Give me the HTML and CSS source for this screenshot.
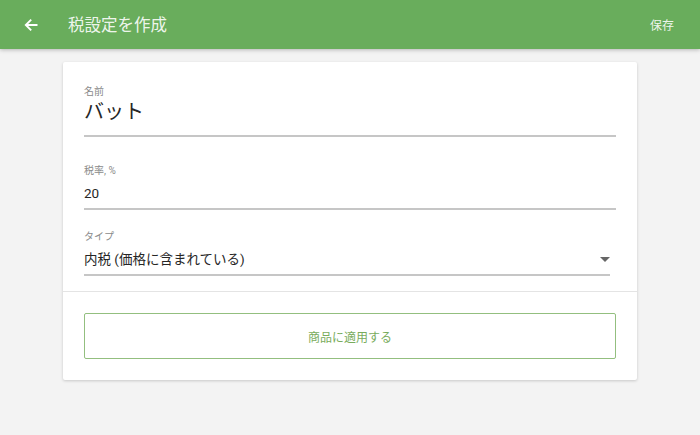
FILE: index.html
```html
<!DOCTYPE html>
<html lang="ja">
<head>
<meta charset="utf-8">
<link rel="stylesheet" href="styles.css">
</head>
<body>
<header class="appbar">
  <svg class="back" width="14" height="14" viewBox="0 0 14 14"><path d="M13.5 7H2M7.2 1.6L1.8 7l5.4 5.4" fill="none" stroke="#fff" stroke-width="1.9"/></svg>
  <h1 class="title">税設定を作成</h1>
  <span class="save">保存</span>
</header>
<main class="card">
  <section class="fields">
    <div class="field name">
      <div class="label">名前</div>
      <div class="value big">バット</div>
    </div>
    <div class="field rate">
      <div class="label">税率, %</div>
      <div class="value">20</div>
    </div>
    <div class="field select">
      <div class="label">タイプ</div>
      <div class="value">内税 (価格に含まれている)<span class="caret"></span></div>
    </div>
  </section>
  <section class="actions">
    <button class="apply">商品に適用する</button>
  </section>
</main>
</body>
</html>
```
FILE: styles.css
```css
* { box-sizing: border-box; }
body {
  margin: 0;
  background: #f3f3f3;
  font-family: Roboto, "Noto Sans CJK JP", sans-serif;
  width: 700px;
  height: 435px;
  overflow: hidden;
}
.appbar {
  height: 49px;
  background: #69ad5c;
  display: flex;
  align-items: center;
  padding: 0 26px 0 24px;
  box-shadow: 0 1px 4px rgba(0,0,0,0.25);
  position: relative;
}
.back { margin-right: 30px; }
.title {
  margin: 0 0 2px;
  flex: 1;
  font-size: 16.5px;
  font-weight: 400;
  color: rgba(255,255,255,0.9);
}
.save {
  font-size: 12px;
  color: rgba(255,255,255,0.9);
}
.card {
  width: 574px;
  margin: 13px auto 0;
  background: #fff;
  border-radius: 2px;
  box-shadow: 0 1px 3px rgba(0,0,0,0.18);
}
.fields {
  padding: 23px 21px 15px;
  border-bottom: 1px solid #e4e4e4;
}
.rate { margin-top: 27px; }
.select { margin-top: 20px; }
.label {
  font-size: 10px;
  color: #8a8a8a;
  line-height: 14px;
}
.value {
  font-size: 13.5px;
  color: #262626;
  line-height: 20px;
  padding: 5px 0 5px;
  border-bottom: 2px solid #c6c6c6;
  position: relative;
}
.value.big {
  font-size: 20px;
  line-height: 26px;
  padding: 0 0 10px;
}
.select .value { margin-right: 6px; }
.caret {
  position: absolute;
  right: 0;
  top: 13px;
  border-left: 5px solid transparent;
  border-right: 5px solid transparent;
  border-top: 5px solid #666;
}
.actions {
  padding: 21px 21px 21px;
}
.apply {
  display: block;
  width: 100%;
  height: 46px;
  background: #fff;
  border: 1px solid #93bf7f;
  border-radius: 2px;
  color: #79ac5c;
  font-family: inherit;
  font-size: 12px;
}
```
